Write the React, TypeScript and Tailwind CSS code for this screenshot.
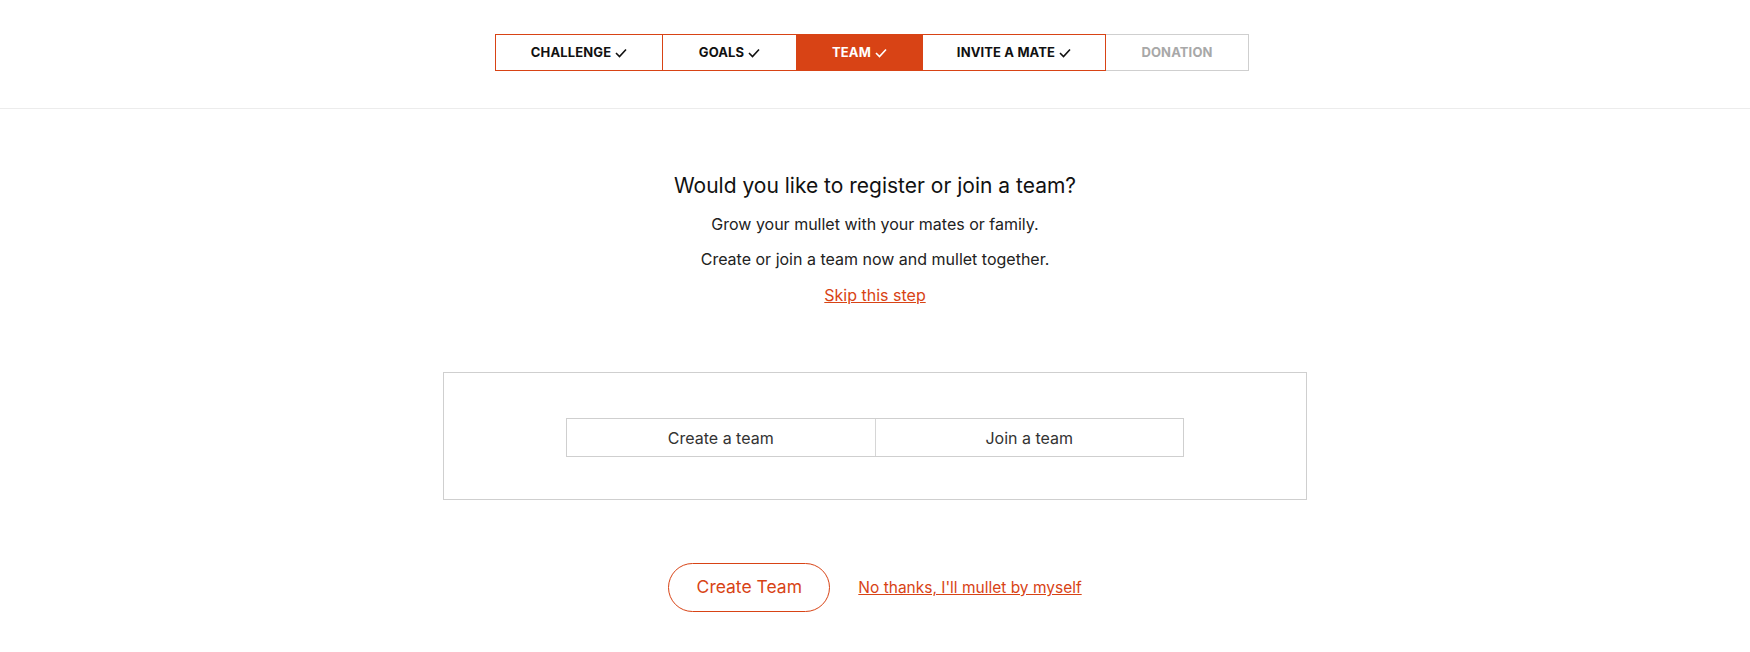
import React from "react";

const steps = [
  { label: "CHALLENGE", width: "w-[168px]", state: "done" },
  { label: "GOALS", width: "w-[134px]", state: "done" },
  { label: "TEAM", width: "w-[126px]", state: "active" },
  { label: "INVITE A MATE", width: "w-[183px]", state: "done" },
  { label: "DONATION", width: "w-[143px]", state: "todo" },
];

function Check({ className }: { className?: string }) {
  return (
    <svg viewBox="0 0 12 10" className={className} fill="none" stroke="currentColor" strokeWidth="1.6">
      <polyline points="1,5 4.5,8.5 11,1.5" />
    </svg>
  );
}

function Stepper() {
  return (
    <ul className="flex">
      {steps.map((s, i) => {
        let cls = "border-[#d84315] text-[#111]";
        if (s.state === "active") cls = "bg-[#d84315] border-[#d84315] text-white";
        if (s.state === "todo") cls = "border-[#cfcfcf] text-[#a8a8a8]";
        return (
          <li
            key={s.label}
            className={`${s.width} h-[37px] flex items-center justify-center gap-1 border ${i > 0 ? "border-l-0" : ""} ${cls} text-[13px] font-bold tracking-[0.01em]`}
          >
            <span>{s.label}</span>
            {s.state !== "todo" && <Check className="w-[12px] h-[10px]" />}
          </li>
        );
      })}
    </ul>
  );
}

export default function App() {
  return (
    <div className="min-h-screen bg-white font-['Inter',sans-serif] text-[#111]">
      <header className="h-[109px] pt-[34px] pr-[6px] border-b border-[#ececec] flex justify-center">
        <Stepper />
      </header>

      <main className="flex flex-col items-center">
        <h1 className="mt-[62px] text-[21px] leading-[30px] text-[#111]">Would you like to register or join a team?</h1>
        <p className="mt-[11px] text-[16px] leading-[24px] text-[#222]">Grow your mullet with your mates or family.</p>
        <p className="mt-[11px] text-[16px] leading-[24px] text-[#222]">Create or join a team now and mullet together.</p>
        <a href="#" className="mt-[12px] text-[16px] leading-[24px] text-[#d84315] underline">
          Skip this step
        </a>

        <section className="mt-[65px] w-[864px] h-[128px] border border-[#cfcfcf] flex justify-center pt-[45px]">
          <div className="flex h-[39px] w-[618px] border border-[#cfcfcf]">
            <button className="flex-1 border-r border-[#d6d6d6] text-[16px] text-[#333]">Create a team</button>
            <button className="flex-1 text-[16px] text-[#333]">Join a team</button>
          </div>
        </section>

        <div className="mt-[63px] flex items-center gap-[28px]">
          <button className="w-[162px] h-[49px] rounded-full border border-[#d84315] text-[#d84315] text-[17.5px]">
            Create Team
          </button>
          <a href="#" className="text-[15.5px] text-[#d84315] underline">
            No thanks, I'll mullet by myself
          </a>
        </div>
      </main>
    </div>
  );
}
